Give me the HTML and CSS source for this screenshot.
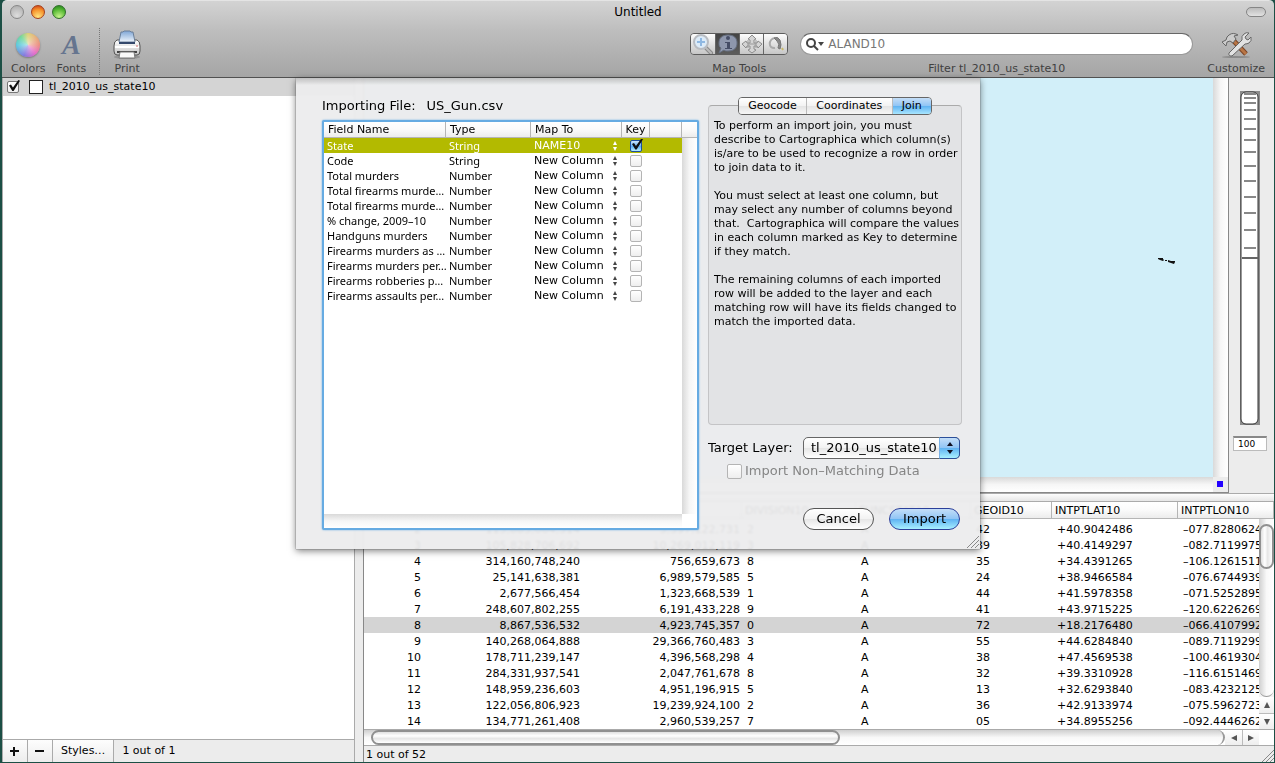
FILE: index.html
```html
<!DOCTYPE html>
<html lang="en">
<head>
<meta charset="utf-8">
<title>Untitled</title>
<link rel="stylesheet" href="styles.css">
</head>
<body>
<div class="window">
  <header class="chrome">
    <div class="titlebar">
      <div class="lights">
        <button class="light light-close" aria-label="Close"></button>
        <button class="light light-min" aria-label="Minimize"></button>
        <button class="light light-zoom" aria-label="Zoom"></button>
      </div>
      <h1 class="title">Untitled</h1>
      <button class="pill" aria-label="Toggle toolbar"></button>
    </div>
    <div class="toolbar">
      <button class="tool tool-colors"><span class="tool-icon"><span class="wheel"></span></span>Colors</button>
      <button class="tool tool-fonts"><span class="tool-icon letter">A</span>Fonts</button>
      <span class="separator"></span>
      <button class="tool tool-print"><span class="tool-icon">
        <svg width="28" height="30" viewBox="0 0 28 30">
          <defs><linearGradient id="paper" x1="0" y1="0" x2="0" y2="1"><stop offset="0" stop-color="#7fa6d6"/><stop offset="1" stop-color="#eef4fb"/></linearGradient>
          <linearGradient id="case" x1="0" y1="0" x2="0" y2="1"><stop offset="0" stop-color="#fff"/><stop offset="1" stop-color="#c4c4c4"/></linearGradient></defs>
          <ellipse cx="14" cy="27" rx="13" ry="2" fill="#777" opacity=".5"/>
          <path d="M4 10q-3 1-3 6v5q0 4 3 4h20q3 0 3-4v-5q0-5-3-6z" fill="url(#case)" stroke="#555"/>
          <path d="M8 2h2l1-1h6l1 1h2l2 10H6z" fill="url(#paper)" stroke="#6b7f99"/>
          <path d="M6 12h16v2H6z" fill="#33486b"/>
          <path d="M2 17h24" stroke="#fff" stroke-width="2"/>
          <path d="M4 22h20" stroke="#444" stroke-width="2"/>
          <path d="M7 22h14l1 6H6z" fill="#fafafa" stroke="#777"/>
          <circle cx="24" cy="16" r="1" fill="#d99"/>
        </svg></span>Print</button>
      <span class="spacer"></span>
      <div class="group">
        <div class="segments">
          <button class="segment" aria-label="Zoom in"><svg width="22" height="20" viewBox="0 0 22 20"><path d="M12 12l7 7" stroke="#8a8a8a" stroke-width="4" stroke-linecap="round"/><path d="M12 12l7 7" stroke="#bbb" stroke-width="2" stroke-linecap="round"/><circle cx="9" cy="8" r="7" fill="#dcebf8" stroke="#b8bcc2" stroke-width="2"/><path d="M9 4v8M5 8h8" stroke="#8fb8e2" stroke-width="2"/></svg></button>
          <button class="segment segment-on" aria-label="Info"><svg width="22" height="20" viewBox="0 0 22 20"><path d="M11 1c6 0 9 3 9 8s-3 8-9 8c-2 0-3 0-4-1l-5 3 2-5C2 13 2 11 2 9c0-5 3-8 9-8z" fill="#8e97ad" stroke="#666f80"/><circle cx="11" cy="4" r="2" fill="#454d66"/><path d="M8 8h5v6h2v1H8v-1h2V9H8z" fill="#454d66"/></svg></button>
          <button class="segment" aria-label="Pan"><svg width="22" height="20" viewBox="0 0 22 20"><path d="M11 1l4 4-2 1v3h3l1-2 4 3-4 4-1-2h-3v3l2 1-4 3-4-3 2-1v-3H6l-1 2-4-4 4-3 1 2h3V6L7 5z" fill="#d4d4d4" stroke="#8d8d8d"/><path d="M7 6v8M15 6v8M7 10h8" stroke="#999"/></svg></button>
          <button class="segment" aria-label="Lasso"><svg width="22" height="20" viewBox="0 0 22 20"><path d="M10 14C3 15 3 5 10 4" fill="none" stroke="#aaa" stroke-width="2"/><path d="M9 4q4-2 6 2 2 5 0 9l-2-1q2-4-1-7z" fill="#888" stroke="#777"/><path d="M17 14l1 2" stroke="#c9b96a" stroke-width="2"/></svg></button>
        </div>
        <span class="caption">Map Tools</span>
      </div>
      <div class="group group-search">
        <label class="search">
          <svg width="20" height="14" viewBox="0 0 20 14"><circle cx="5" cy="6" r="4" fill="none" stroke="#444" stroke-width="2"/><path d="M8 9l4 4" stroke="#444" stroke-width="2"/><path d="M12 5h6l-3 4z" fill="#444"/></svg>
          <input class="search-input" type="text" placeholder="ALAND10" aria-label="Filter">
        </label>
        <span class="caption">Filter tl_2010_us_state10</span>
      </div>
      <button class="tool tool-customize"><span class="tool-icon">
        <svg width="32" height="28" viewBox="0 0 32 28">
          <ellipse cx="16" cy="26" rx="14" ry="1" fill="#666" opacity=".5"/>
          <path d="M12 8l14 15" stroke="#7a4426" stroke-width="5"/><path d="M12 8l14 15" stroke="#b87545" stroke-width="3"/>
          <path d="M2 11l4-2 1-3q4-5 9-3l2 1-4 1 2 3-3 4-3-2-3 1-1 4z" fill="#ccc" stroke="#666"/>
          <path d="M9 22L22 9q-1-4 2-6 2-2 5-1l-4 4 1 2 2 1 3-3q1 4-2 6-2 1-4 1L12 25q-4 0-3-3z" fill="#e2e2e2" stroke="#666"/>
        </svg></span>Customize</button>
    </div>
  </header>

  <main class="content">
    <aside class="sidebar">
      <ul class="layers">
        <li class="layer">
          <input class="check" type="checkbox" checked aria-label="Show tl_2010_us_state10">
          <span class="swatch"></span>
          <span>tl_2010_us_state10</span>
        </li>
      </ul>
      <footer class="sidebar-bar">
        <button class="bar-button bar-sign" aria-label="Add"><svg width="9" height="9"><path d="M4 0v9M0 4h9" stroke="#111" stroke-width="2"/></svg></button>
        <button class="bar-button bar-sign" aria-label="Remove"><svg width="9" height="9"><path d="M0 4h9" stroke="#111" stroke-width="2"/></svg></button>
        <button class="bar-button">Styles…</button>
        <span class="bar-text">1 out of 1</span>
      </footer>
    </aside>

    <section class="workspace">
      <div class="map-area">
        <div class="map-pane">
          <div class="map"><svg class="island" width="18" height="6" viewBox="0 0 18 6"><path d="M0 0h5v1l1 1-1 1-3-1-2-1zM7 2h2v1H7zM10 2l3 1 4 0 0 1-1 2-3-1-3-1z" fill="#111"/></svg></div>
          <div class="track-v"></div>
          <div class="track-h"></div>
          <div class="corner"><span class="corner-dot"></span></div>
        </div>
        <div class="zoom-panel">
          <div class="zoomer">
            <svg width="20" height="334" viewBox="0 0 20 334">
              <path d="M0 0h20v334H0z" fill="#8c8c8c"/>
              <rect x="1" y="1" width="17" height="332" rx="5" fill="#fff" stroke="#333"/>
              <path d="M4 3h12M4 7h12M4 12h12M4 19h12M4 28h12M4 38h12M4 49h12M4 61h12M4 75h12M4 90h12M4 106h12M4 122h12M4 139h12M4 157h12" stroke="#888" stroke-width="2"/>
              <path d="M2 167h16" stroke="#666" stroke-width="2"/>
            </svg>
            <input class="zoom-range" type="range" min="0" max="200" value="100" aria-label="Zoom level">
          </div>
          <input class="zoom-value" type="text" value="100" aria-label="Zoom value">
        </div>
      </div>
      <div class="splitter"></div>
      <div class="data-pane">
        <div class="data-scroll">
          <table class="data">
            <colgroup><col class="c-id"><col class="c-land"><col class="c-water"><col class="c-div"><col class="c-func"><col class="c-geo"><col class="c-lat"><col></colgroup>
            <thead><tr><th></th><th>ALAND10</th><th>AWATER10</th><th>DIVISION10</th><th>FUNCSTAT10</th><th>GEOID10</th><th>INTPTLAT10</th><th>INTPTLON10</th></tr></thead>
            <tbody>
              <tr><td>2</td><td>115,883,064,314</td><td>3,397,122,731</td><td>2</td><td>A</td><td>42</td><td>+40.9042486</td><td>–077.8280624</td></tr>
              <tr><td>3</td><td>105,828,706,692</td><td>10,269,012,119</td><td>3</td><td>A</td><td>39</td><td>+40.4149297</td><td>–082.7119975</td></tr>
              <tr><td>4</td><td>314,160,748,240</td><td>756,659,673</td><td>8</td><td>A</td><td>35</td><td>+34.4391265</td><td>–106.1261511</td></tr>
              <tr><td>5</td><td>25,141,638,381</td><td>6,989,579,585</td><td>5</td><td>A</td><td>24</td><td>+38.9466584</td><td>–076.6744939</td></tr>
              <tr><td>6</td><td>2,677,566,454</td><td>1,323,668,539</td><td>1</td><td>A</td><td>44</td><td>+41.5978358</td><td>–071.5252895</td></tr>
              <tr><td>7</td><td>248,607,802,255</td><td>6,191,433,228</td><td>9</td><td>A</td><td>41</td><td>+43.9715225</td><td>–120.6226269</td></tr>
              <tr class="current"><td>8</td><td>8,867,536,532</td><td>4,923,745,357</td><td>0</td><td>A</td><td>72</td><td>+18.2176480</td><td>–066.4107992</td></tr>
              <tr><td>9</td><td>140,268,064,888</td><td>29,366,760,483</td><td>3</td><td>A</td><td>55</td><td>+44.6284840</td><td>–089.7119299</td></tr>
              <tr><td>10</td><td>178,711,239,147</td><td>4,396,568,298</td><td>4</td><td>A</td><td>38</td><td>+47.4569538</td><td>–100.4619304</td></tr>
              <tr><td>11</td><td>284,331,937,541</td><td>2,047,761,678</td><td>8</td><td>A</td><td>32</td><td>+39.3310928</td><td>–116.6151469</td></tr>
              <tr><td>12</td><td>148,959,236,603</td><td>4,951,196,915</td><td>5</td><td>A</td><td>13</td><td>+32.6293840</td><td>–083.4232125</td></tr>
              <tr><td>13</td><td>122,056,806,923</td><td>19,239,924,100</td><td>2</td><td>A</td><td>36</td><td>+42.9133974</td><td>–075.5962723</td></tr>
              <tr><td>14</td><td>134,771,261,408</td><td>2,960,539,257</td><td>7</td><td>A</td><td>05</td><td>+34.8955256</td><td>–092.4446262</td></tr>
            </tbody>
          </table>
          <div class="vbar"><span class="vtrack"><span class="vthumb"></span></span><span class="arrow arrow-up"></span><span class="arrow arrow-down"></span></div>
        </div>
        <div class="hbar"><span class="htrack"><span class="hthumb"></span></span><span class="arrow arrow-left"></span><span class="arrow arrow-right"></span><span class="hend"></span></div>
        <footer class="status"><span>1 out of 52</span><svg class="grip" width="12" height="12" viewBox="0 0 12 12"><path d="M0 12L12 0M4 12l8-8M8 12l4-4" stroke="#888"/></svg></footer>
      </div>
    </section>

    <form class="sheet" role="dialog" aria-label="Import">
      <section class="sheet-left">
        <p class="file-line"><span>Importing File:</span><span>US_Gun.csv</span></p>
        <div class="field-list">
          <table class="fields">
            <colgroup><col class="f-name"><col class="f-type"><col class="f-map"><col class="f-key"><col class="f-pad"><col></colgroup>
            <thead><tr><th>Field Name</th><th>Type</th><th>Map To</th><th class="key">Key</th><th></th><th></th></tr></thead>
            <tbody>
              <tr class="selected"><td>State</td><td>String</td><td><span class="mapto"><select aria-label="Map State to"><option>NAME10</option></select></span></td><td class="key"><input class="check check-blue" type="checkbox" checked aria-label="State is key"></td><td></td><td class="gutter"></td></tr>
              <tr><td>Code</td><td>String</td><td><span class="mapto"><select aria-label="Map Code to"><option>New Column</option></select></span></td><td class="key"><input class="check" type="checkbox" aria-label="Code is key"></td><td></td><td class="gutter"></td></tr>
              <tr><td>Total murders</td><td>Number</td><td><span class="mapto"><select aria-label="Map Total murders to"><option>New Column</option></select></span></td><td class="key"><input class="check" type="checkbox" aria-label="Total murders is key"></td><td></td><td class="gutter"></td></tr>
              <tr><td>Total firearms murde…</td><td>Number</td><td><span class="mapto"><select aria-label="Map field 4 to"><option>New Column</option></select></span></td><td class="key"><input class="check" type="checkbox" aria-label="Field 4 is key"></td><td></td><td class="gutter"></td></tr>
              <tr><td>Total firearms murde…</td><td>Number</td><td><span class="mapto"><select aria-label="Map field 5 to"><option>New Column</option></select></span></td><td class="key"><input class="check" type="checkbox" aria-label="Field 5 is key"></td><td></td><td class="gutter"></td></tr>
              <tr><td>% change, 2009–10</td><td>Number</td><td><span class="mapto"><select aria-label="Map % change to"><option>New Column</option></select></span></td><td class="key"><input class="check" type="checkbox" aria-label="% change is key"></td><td></td><td class="gutter"></td></tr>
              <tr><td>Handguns murders</td><td>Number</td><td><span class="mapto"><select aria-label="Map Handguns murders to"><option>New Column</option></select></span></td><td class="key"><input class="check" type="checkbox" aria-label="Handguns murders is key"></td><td></td><td class="gutter"></td></tr>
              <tr><td>Firearms murders as …</td><td>Number</td><td><span class="mapto"><select aria-label="Map field 8 to"><option>New Column</option></select></span></td><td class="key"><input class="check" type="checkbox" aria-label="Field 8 is key"></td><td></td><td class="gutter"></td></tr>
              <tr><td>Firearms murders per…</td><td>Number</td><td><span class="mapto"><select aria-label="Map field 9 to"><option>New Column</option></select></span></td><td class="key"><input class="check" type="checkbox" aria-label="Field 9 is key"></td><td></td><td class="gutter"></td></tr>
              <tr><td>Firearms robberies p…</td><td>Number</td><td><span class="mapto"><select aria-label="Map field 10 to"><option>New Column</option></select></span></td><td class="key"><input class="check" type="checkbox" aria-label="Field 10 is key"></td><td></td><td class="gutter"></td></tr>
              <tr><td>Firearms assaults per…</td><td>Number</td><td><span class="mapto"><select aria-label="Map field 11 to"><option>New Column</option></select></span></td><td class="key"><input class="check" type="checkbox" aria-label="Field 11 is key"></td><td></td><td class="gutter"></td></tr>
            </tbody>
          </table>
          <div class="list-rest"></div>
          <div class="track-h"></div>
        </div>
      </section>
      <section class="sheet-right">
        <div class="tabs" role="tablist">
          <button type="button" class="tab" role="tab">Geocode</button><button type="button" class="tab" role="tab">Coordinates</button><button type="button" class="tab tab-on" role="tab" aria-selected="true">Join</button>
        </div>
        <div class="tab-pane" role="tabpanel">
          <p>To perform an import join, you must<br>describe to Cartographica which column(s)<br>is/are to be used to recognize a row in order<br>to join data to it.</p>
          <p>You must select at least one column, but<br>may select any number of columns beyond<br>that.&nbsp; Cartographica will compare the values<br>in each column marked as Key to determine<br>if they match.</p>
          <p>The remaining columns of each imported<br>row will be added to the layer and each<br>matching row will have its fields changed to<br>match the imported data.</p>
        </div>
        <div class="target">
          <label for="target">Target Layer:</label>
          <span class="popup"><select id="target"><option>tl_2010_us_state10</option></select><span class="popup-cap"><svg width="8" height="12" viewBox="0 0 8 12"><path d="M4 0l3 4H1zM4 12L1 8h6z" fill="#112"/></svg></span></span>
        </div>
        <label class="nonmatching"><input class="check check-large" type="checkbox" disabled>Import Non–Matching Data</label>
        <div class="actions">
          <button type="button" class="push">Cancel</button>
          <button type="submit" class="push push-default">Import</button>
        </div>
      </section>
      <svg class="sheet-grip" width="12" height="12" viewBox="0 0 12 12"><path d="M0 12L12 0M4 12l8-8M8 12l4-4" stroke="#888"/></svg>
    </form>
  </main>
</div>
</body>
</html>
```
FILE: styles.css
```css
* { box-sizing: border-box; }
body {
  margin: 0;
  background: #1c4f45;
  color: #000;
  font: 11px/14px "Lucida Grande", "DejaVu Sans", sans-serif;
}
button, input, select { font: inherit; color: inherit; margin: 0; }
button { border: 0; padding: 0; background: none; }
p, h1, ul { margin: 0; padding: 0; font-weight: normal; }
svg { display: block; }
table { border-collapse: separate; border-spacing: 0; table-layout: fixed; width: 100%; }

.window {
  display: flex;
  flex-direction: column;
  height: 100vh;
  border: solid #1c4f45;
  border-width: 0 1px 1px 2px;
}

/* title bar and toolbar */
.chrome {
  background: linear-gradient(#d3d3d3, #bdbdbd 40%, #a5a5a5);
  border-top: 1px solid #e4e4e4;
  border-bottom: 1px solid #515151;
  border-radius: 5px 5px 0 0;
}
.titlebar {
  display: grid;
  grid-template-columns: 1fr auto 1fr;
  align-items: center;
  height: 21px;
  padding: 0 8px;
}
.title { font-size: 12px; line-height: 16px; }
.lights { display: flex; gap: 7px; }
.light { width: 14px; height: 14px; border-radius: 50%; border: 1px solid #888; }
.light-close { background: radial-gradient(circle at 50% 80%, #ddd, #aaa); }
.light-min { background: radial-gradient(circle at 50% 90%, #ffe680, #f5902a 60%, #c4331a); border-color: #a5401c; }
.light-zoom { background: radial-gradient(circle at 50% 90%, #c8f58c, #55b833 60%, #1f7a1c); border-color: #2f6f2a; }
.pill {
  justify-self: end;
  width: 20px;
  height: 10px;
  border: 1px solid #858585;
  border-radius: 5px;
  background: linear-gradient(#bbb, #e2e2e2);
}
.toolbar {
  display: flex;
  align-items: flex-start;
  height: 55px;
  padding: 6px 9px 0 9px;
  color: #404040;
}
.tool { display: flex; flex-direction: column; align-items: center; gap: 1px; }
.tool-icon { display: flex; align-items: center; justify-content: center; height: 33px; }
.tool-fonts { margin-left: 11px; }
.tool-print { margin-left: 13px; }
.wheel {
  width: 24px;
  height: 24px;
  border-radius: 50%;
  background:
    radial-gradient(circle, rgba(255,255,255,.6), rgba(255,255,255,.1) 75%),
    conic-gradient(#d8c860, #e87a6a 90deg, #e050c0 140deg, #6a60d8 200deg, #40c0d8 270deg, #58d088 320deg, #d8c860);
  box-shadow: 0 1px 2px #777;
}
.letter { font: italic bold 28px/33px "Liberation Serif", serif; color: #66758f; }
.separator { height: 47px; margin-left: 13px; border-left: 1px dotted #777; }
.spacer { flex: 1; }
.group { display: flex; flex-direction: column; align-items: center; gap: 7px; padding-top: 5px; }
.group-search { flex: 0 1 393px; margin: 0 14px 0 12px; }
.segments { display: flex; border: 1px solid #5c5c5c; border-radius: 4px; overflow: hidden; }
.segment {
  display: flex;
  align-items: center;
  justify-content: center;
  width: 24px;
  height: 20px;
  background: linear-gradient(#fdfdfd, #c6c6c6);
}
.segment + .segment { border-left: 1px solid #666; }
.segment-on { background: linear-gradient(#444, #5c5c5c); }
.search {
  display: flex;
  align-items: center;
  gap: 2px;
  width: 100%;
  height: 22px;
  padding: 0 5px;
  border: 1px solid #999;
  border-top-color: #666;
  border-radius: 11px;
  background: #fff;
}
.search-input { flex: 1; min-width: 0; border: 0; padding: 0; background: none; outline: 0; font-size: 12px; }
.search-input::placeholder { color: #777; opacity: 1; }

/* main split */
.content { position: relative; flex: 1; display: flex; min-height: 0; background: #ececec; }
.sidebar {
  display: flex;
  flex-direction: column;
  flex: 0 0 353px;
  border: solid #aaa;
  border-width: 0 1px;
  background: #fff;
}
.layers { flex: 1; list-style: none; }
.layer { display: flex; align-items: center; height: 18px; padding-left: 4px; background: #d4d4d4; }
.swatch { width: 14px; height: 14px; margin: 0 6px 0 10px; border: 1px solid #222; background: #fff; }
.sidebar-bar { display: flex; height: 23px; border-top: 1px solid #aaa; background: #ececec; }
.bar-button {
  padding: 0 8px;
  border-right: 1px solid #aaa;
  background: linear-gradient(#fdfdfd, #ededed);
}
.bar-sign { padding: 0 8px 0 7px; }
.bar-text { padding: 4px 8px; }
.workspace {
  display: flex;
  flex-direction: column;
  flex: 1;
  min-width: 0;
  margin-left: 8px;
  border-left: 1px solid #888;
}

/* map */
.map-area { flex: 1; display: flex; min-height: 0; }
.map-pane {
  flex: 1;
  display: grid;
  grid-template: 1fr 15px / 1fr 15px;
  border: solid #888;
  border-width: 0 1px 1px 0;
}
.map { position: relative; background: #d2eff9; }
.island { position: absolute; right: 37px; top: 45%; }
.track-v { background: linear-gradient(90deg, #d9d9d9, #f6f6f6 50%, #fff); }
.track-h { background: linear-gradient(#d9d9d9, #f6f6f6 50%, #fff); }
.corner { padding: 4px; background: #ececec; }
.corner-dot { display: block; width: 6px; height: 6px; background: #20f; }
.zoom-panel { display: flex; flex-direction: column; align-items: center; gap: 11px; width: 45px; padding: 13px 3px 0 0; }
.zoomer { position: relative; }
.zoom-range { position: absolute; inset: 0; width: 100%; height: 100%; opacity: 0; writing-mode: vertical-lr; }
.zoom-value {
  width: 34px;
  height: 15px;
  padding: 0 4px;
  border: 1px solid #bbb;
  border-top: 2px solid #888;
  background: #fff;
  font-size: 9px;
}
.splitter { height: 9px; border: solid #aaa; border-width: 1px 0; background: linear-gradient(#fdfdfd, #e6e6e6); }

/* attribute table */
.data-scroll { position: relative; background: #fff; overflow: hidden; }
.c-id { width: 59px; }
.c-land { width: 159px; }
.c-water { width: 160px; }
.c-div { width: 114px; }
.c-func { width: 115px; }
.c-geo { width: 81px; }
.c-lat { width: 126px; }
.data th {
  height: 17px;
  padding: 1px 3px 0;
  border: solid #b5b5b5;
  border-width: 0 1px 1px 0;
  background: linear-gradient(#fff, #fafafa 50%, #ececec);
  font-weight: normal;
  text-align: left;
}
.data tbody::before { content: ""; display: block; height: 2px; }
.data td { height: 16px; padding: 1px 5px 0; white-space: nowrap; line-height: 15px; }
.data td:nth-child(-n+3) { padding: 1px 2px 0; text-align: right; }
.current { background: #d4d4d4; }
.vbar {
  position: absolute;
  top: 17px;
  right: 0;
  bottom: 0;
  display: flex;
  flex-direction: column;
  width: 15px;
  background: #f4f4f4;
}
.vtrack {
  flex: 1;
  padding-top: 5px;
  border-radius: 0 0 8px 8px;
  border-bottom: 1px solid #999;
  background: linear-gradient(90deg, #cfcfcf, #f8f8f8 50%, #fff);
}
.vthumb {
  display: block;
  height: 45px;
  border: 2px solid #909090;
  border-radius: 8px;
  background: linear-gradient(90deg, #e0e0e0, #fff 35%, #e6e6e6 60%, #fff);
}
.arrow { display: flex; align-items: center; justify-content: center; width: 15px; height: 16px; background: linear-gradient(#fff, #eee); }
.arrow::before { content: ""; border: 3px solid transparent; }
.arrow-up::before { border-top: 0; border-bottom: 6px solid #555; }
.arrow-down { border-top: 1px solid #bbb; }
.arrow-down::before { border-bottom: 0; border-top: 6px solid #555; }
.arrow-left::before { border-left: 0; border-right: 6px solid #555; }
.arrow-right { border-left: 1px solid #bbb; }
.arrow-right::before { border-right: 0; border-left: 6px solid #555; }
.hbar { display: flex; height: 17px; border: solid #aaa; border-width: 1px 0; background: #fff; }
.hbar .arrow { width: 17px; height: 15px; }
.htrack { flex: 1; padding-left: 7px; border-right: 2px solid #999; border-radius: 0 8px 8px 0; background: linear-gradient(#cfcfcf, #f8f8f8 50%, #fff); }
.hthumb {
  display: block;
  width: 55%;
  height: 15px;
  border: 2px solid #909090;
  border-radius: 8px;
  background: linear-gradient(#e0e0e0, #fff 35%, #e6e6e6 60%, #fff);
}
.hend { width: 15px; }
.status { display: flex; justify-content: space-between; align-items: flex-end; height: 16px; padding-left: 2px; background: #ececec; }

/* check boxes */
.check {
  appearance: none;
  flex: none;
  position: relative;
  display: block;
  width: 12px;
  height: 12px;
  border: 1px solid #777;
  border-radius: 2px;
  background: linear-gradient(#fff, #eee);
}
.check:not(:checked) { border-color: #b4b4b4; }
.check:checked::after {
  content: "";
  position: absolute;
  left: 1px;
  top: -2px;
  width: 11px;
  height: 11px;
  background: #111;
  clip-path: polygon(0 50%, 18% 42%, 36% 68%, 85% 0, 100% 6%, 42% 100%, 30% 100%);
}
.check-blue { border-color: #1d4f9e; background: linear-gradient(#cfe6fb, #5fb0f2 55%, #b8f0ff); }
.check-large { width: 15px; height: 15px; }

/* import sheet */
.sheet {
  position: absolute;
  top: 0;
  left: 0;
  right: 0;
  margin: 0 auto;
  display: flex;
  gap: 9px;
  width: 684px;
  padding: 19px 18px 19px 26px;
  background: linear-gradient(rgba(150,150,150,.5), rgba(236,236,237,0) 7px), rgba(236,236,237,.94);
  box-shadow: 0 2px 7px rgba(0,0,0,.5), 0 0 1px #555;
  backdrop-filter: blur(1px);
}
.sheet-left { flex: 1; display: flex; flex-direction: column; }
.file-line { display: flex; gap: 11px; padding-bottom: 5px; font-size: 13px; line-height: 18px; }
.field-list {
  flex: 1;
  display: flex;
  flex-direction: column;
  border: 2px solid #66abe2;
  border-radius: 2px;
  box-shadow: 0 0 2px #66abe2;
  background: #fff;
}
.f-name { width: 122px; }
.f-type { width: 85px; }
.f-map { width: 91px; }
.f-key { width: 28px; }
.f-pad { width: 32px; }
.fields th {
  height: 16px;
  padding: 0 4px;
  border: solid #b5b5b5;
  border-width: 0 1px 1px 0;
  background: linear-gradient(#fff, #fafafa 50%, #ececec);
  font-weight: normal;
  text-align: left;
  line-height: 15px;
}
.fields th:last-child { border-right: 0; }
.fields td { height: 15px; padding: 0 3px; line-height: 15px; white-space: nowrap; }
.fields td:nth-child(-n+2) { font-family: "Lucida Grande", "Noto Sans", sans-serif; }
.fields .key { padding: 0; text-align: center; }
.key .check { margin: 0 auto; }
.fields .gutter { padding: 0; background: linear-gradient(90deg, #d9d9d9, #f6f6f6 50%, #fff); }
.selected { background: #b3ba00; color: #fff; }
.mapto { position: relative; display: block; }
.mapto select { display: block; appearance: none; width: 100%; height: 15px; padding: 0; border: 0; background: none; }
.mapto::before, .mapto::after { content: ""; position: absolute; right: 2px; border: 2px solid transparent; pointer-events: none; }
.mapto::before { top: 3px; border-top: 0; border-bottom: 4px solid #444; }
.mapto::after { bottom: 2px; border-bottom: 0; border-top: 4px solid #444; }
.selected .mapto::before { border-bottom-color: #fff; }
.selected .mapto::after { border-top-color: #fff; }
.list-rest { flex: 1; margin-left: 358px; background: linear-gradient(90deg, #d9d9d9, #f6f6f6 50%, #fff); }
.field-list .track-h { height: 14px; margin-right: 15px; }

.sheet-right { width: 254px; }
.tabs { position: relative; display: flex; width: 194px; margin: 0 auto -10px; border: 1px solid #666; border-radius: 4px; overflow: hidden; }
.tab { flex: 1 1 auto; height: 16px; background: linear-gradient(#fff, #f2f2f2 50%, #e4e4e4 51%, #f6f6f6); }
.tab + .tab { border-left: 1px solid #bbb; }
.tab-on { background: linear-gradient(#c4def8, #8fc4f5 50%, #5fb2f2 51%, #a8e6ff); }
.tab-pane {
  height: 320px;
  padding: 13px 5px;
  border: 1px solid #c4c4c6;
  border-top-color: #aaa;
  border-radius: 4px;
  background: #e2e3e5;
}
.tab-pane p { margin-bottom: 14px; white-space: nowrap; }
.target { display: flex; justify-content: space-between; align-items: center; margin: 12px 2px 0 0; font-size: 13px; }
.popup { position: relative; width: 157px; }
.popup select {
  display: block;
  appearance: none;
  width: 100%;
  height: 22px;
  padding: 0 7px;
  border: 1px solid #666;
  border-radius: 5px;
  background: linear-gradient(#fff, #f2f2f2 50%, #e6e6e6 51%, #fff);
}
.popup-cap {
  position: absolute;
  top: 0;
  right: 0;
  bottom: 0;
  display: flex;
  align-items: center;
  justify-content: center;
  width: 21px;
  border: 1px solid #2b4f9a;
  border-left-color: #7ab2e6;
  border-radius: 0 5px 5px 0;
  background: linear-gradient(#c4def8, #8fc4f5 50%, #5fb2f2 51%, #a8f0ff);
  pointer-events: none;
}
.nonmatching { display: flex; align-items: center; gap: 3px; margin: 3px 0 0 19px; color: #858585; font-size: 13px; line-height: 18px; white-space: nowrap; }
.actions { display: flex; justify-content: flex-end; gap: 15px; margin: 28px 2px 0 0; font-size: 13px; }
.push {
  width: 71px;
  height: 22px;
  border: 1px solid #555;
  border-radius: 11px;
  background: linear-gradient(#fff, #f2f2f2 50%, #e6e6e6 51%, #fff);
}
.push-default { border-color: #2b3f9a; background: linear-gradient(#c4def8, #8fc4f5 50%, #5fb2f2 51%, #a8f0ff); }
.sheet-grip { position: absolute; right: 1px; bottom: 1px; }
```
